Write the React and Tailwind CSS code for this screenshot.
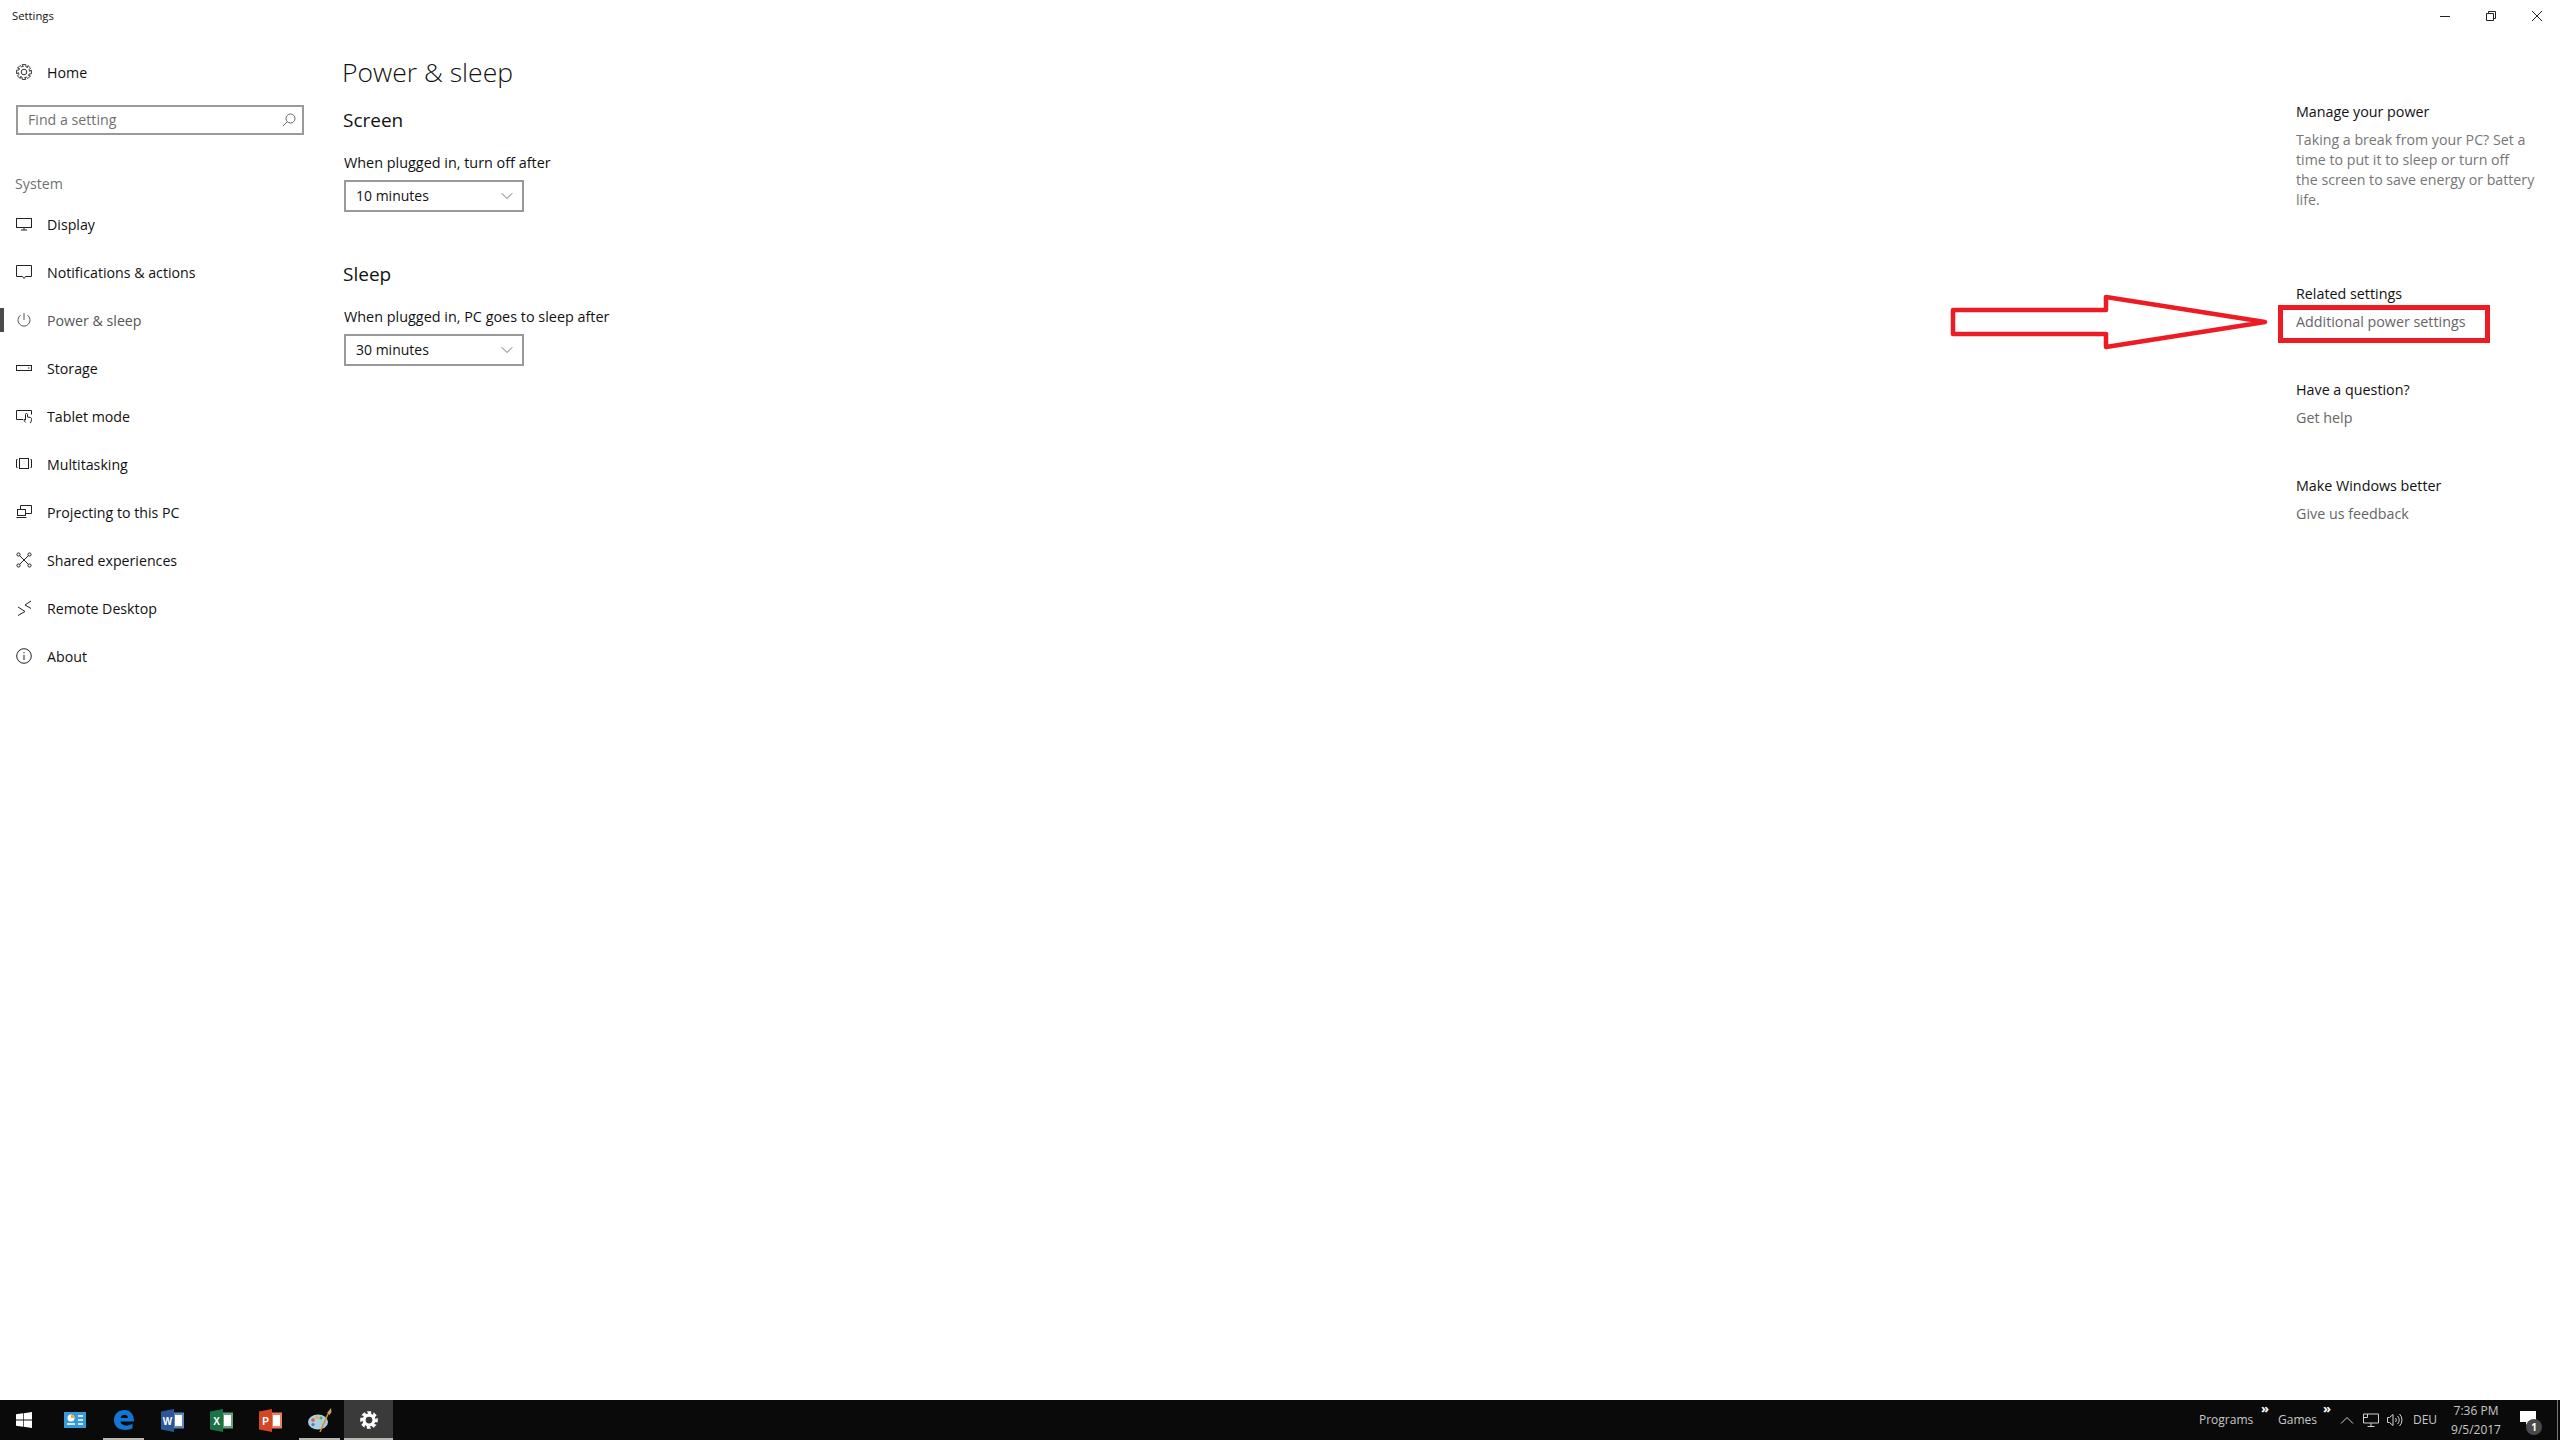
import React from 'react';
import { ChevronDown } from 'lucide-react';

const fontClass = "font-['Open_Sans','Noto_Sans',sans-serif]";

// 8-tooth cog outline, outer and inner radius in a 16 unit box
const cogPath = (outer, inner) => {
  const pts = [];
  for (let i = 0; i < 8; i++) {
    const a = (i * Math.PI) / 4;
    [[-0.24, outer], [0.24, outer], [0.36, inner], [0.66, inner]].forEach(([d, r]) => {
      pts.push(`${(8 + r * Math.cos(a + d)).toFixed(2)} ${(8 + r * Math.sin(a + d)).toFixed(2)}`);
    });
  }
  return `M${pts.join('L')}z`;
};

const HomeGear = () => (
  <svg width="16" height="16" viewBox="0 0 16 16" fill="none" stroke="#333333" strokeWidth="1" strokeLinejoin="round" className="mr-[15px]">
    <circle cx="8" cy="8" r="2.8" />
    <path d={cogPath(7.6, 5.6)} />
  </svg>
);

const TaskbarGear = () => (
  <svg width="18" height="18" viewBox="0 0 16 16" fill="#ffffff" fillRule="evenodd">
    <path d={`${cogPath(8, 5.8)}M8 5a3 3 0 1 0 0 6a3 3 0 1 0 0-6z`} />
  </svg>
);

// Thin line icons used in the settings nav
const navIcons = {
  display: <><rect x="0.5" y="2.5" width="15" height="9" /><path d="M8 11.5v2.5M5 14h6" /></>,
  notifications: <path d="M0.5 1.5h15v11h-6l-1.5 2-1.5-2h-6z" />,
  power: <><path d="M8 1v7" /><path d="M4.6 3.2a6 6 0 1 0 6.8 0" /></>,
  storage: <><rect x="0.5" y="5.5" width="15" height="5" /><path d="M12 8h1.5" /></>,
  tablet: <><path d="M7 11.5H0.5v-9h15v4" /><path d="M9.5 14.5c-1-1-1.5-2-1.5-3l1.5.5V6.5a1 1 0 0 1 2 0V9l3 .5c1 .3 1 1 1 2 0 1.5-.5 2.500-1.200 3.500" /></>,
  multitasking: <><rect x="3.5" y="2.5" width="9" height="10" /><path d="M1.5 3.5H0.5v8h1M14.5 3.5h1v8h-1" /></>,
  projecting: <><path d="M4.5 5V1.5h11v8H10" /><rect x="1.5" y="5.5" width="8" height="6" /><path d="M0.5 13.5h10" /></>,
  shared: <><circle cx="2.5" cy="2.5" r="1.6" /><circle cx="13.5" cy="2.5" r="1.6" /><circle cx="2.5" cy="13.5" r="1.6" /><circle cx="13.5" cy="13.5" r="1.6" /><path d="M3.7 3.7l8.6 8.6M12.3 3.7l-8.6 8.6" /></>,
  remote: <><path d="M2 7l7 4.5L2 15.5" /><path d="M15 1L9 5l6 3.5" /></>,
  about: <><circle cx="8" cy="8" r="7.3" /><path d="M8 7v5M8 4.2v1.2" /></>,
};

const navItems = [
  { label: 'Display', icon: 'display' },
  { label: 'Notifications & actions', icon: 'notifications' },
  { label: 'Power & sleep', icon: 'power', active: true },
  { label: 'Storage', icon: 'storage' },
  { label: 'Tablet mode', icon: 'tablet' },
  { label: 'Multitasking', icon: 'multitasking' },
  { label: 'Projecting to this PC', icon: 'projecting' },
  { label: 'Shared experiences', icon: 'shared' },
  { label: 'Remote Desktop', icon: 'remote' },
  { label: 'About', icon: 'about' },
];

const Dropdown = ({ value }) => (
  <div className="w-[180px] h-[32px] border-2 border-[#999999] flex items-center justify-between pl-[10px] pr-[5px] text-[14px] text-[#111111]">
    <span className="pb-[1px]">{value}</span>
    <ChevronDown className="w-[20px] h-[20px] text-[#555555]" strokeWidth={1} />
  </div>
);

const Sidebar = () => (
  <aside className="w-[342px] shrink-0">
    <div className="h-[48px] mt-[16px] pl-[16px] flex items-center text-[14.2px] text-[#111111]">
      <HomeGear />
      <span className="pt-[1px]">Home</span>
    </div>
    <div className="ml-[16px] mt-[9px] w-[288px] h-[30px] border-2 border-[#999999] flex items-center justify-between pl-[10px] pr-[6px] text-[14.2px] text-[#707070]">
      <span className="pb-[1px]">Find a setting</span>
      <svg width="14" height="14" viewBox="0 0 14 14" fill="none" stroke="#666666" strokeWidth="1">
        <circle cx="8.5" cy="5.5" r="4.5" />
        <path d="M5.3 8.7L0.8 13.2" />
      </svg>
    </div>
    <div className="mt-[33px] h-[32px] pl-[15px] flex items-center text-[14.2px] text-[#707070]">System</div>
    {navItems.map((item) => (
      <div key={item.label} className="relative h-[48px] pl-[16px] flex items-center text-[14.2px]">
        {item.active && <div className="absolute left-0 top-[12px] w-[4px] h-[24px] bg-[#4c4a48]" />}
        <svg width="16" height="16" viewBox="0 0 16 16" fill="none" stroke={item.active ? '#555555' : '#222222'} strokeWidth="1" className="mr-[15px] shrink-0">
          {navIcons[item.icon]}
        </svg>
        <span className={`pt-[1px] ${item.active ? 'text-[#555555]' : 'text-[#111111]'}`}>{item.label}</span>
      </div>
    ))}
  </aside>
);

const MainContent = () => (
  <main className="flex-1">
    <h1 className="mt-[20px] h-[40px] leading-[40px] text-[26.5px] text-[#111111] font-light">Power &amp; sleep</h1>
    <h2 className="mt-[14px] h-[28px] leading-[28px] ml-[1px] text-[19px] text-[#111111]">Screen</h2>
    <div className="mt-[19px] h-[20px] leading-[20px] ml-[2px] text-[14.4px] text-[#111111]">When plugged in, turn off after</div>
    <div className="mt-[7px] ml-[2px]"><Dropdown value="10 minutes" /></div>
    <h2 className="mt-[48px] h-[28px] leading-[28px] ml-[1px] text-[19px] text-[#111111]">Sleep</h2>
    <div className="mt-[19px] h-[20px] leading-[20px] ml-[2px] text-[14.4px] text-[#111111]">When plugged in, PC goes to sleep after</div>
    <div className="mt-[7px] ml-[2px]"><Dropdown value="30 minutes" /></div>
  </main>
);

const RightPanel = () => (
  <section className="relative w-[264px] shrink-0 text-[14.3px] leading-[20px]">
    <div className="mt-[70px] text-[#111111]">Manage your power</div>
    <div className="mt-[8px] text-[#767676] text-[14.2px]">
      <div>Taking a break from your PC? Set a</div>
      <div>time to put it to sleep or turn off</div>
      <div>the screen to save energy or battery</div>
      <div>life.</div>
    </div>
    <div className="mt-[74px] text-[#111111]">Related settings</div>
    <div className="mt-[8px] text-[#666666]">Additional power settings</div>
    <div className="mt-[48px] text-[#111111]">Have a question?</div>
    <div className="mt-[8px] text-[#666666]">Get help</div>
    <div className="mt-[48px] text-[#111111]">Make Windows better</div>
    <div className="mt-[8px] text-[#666666]">Give us feedback</div>

    {/* Red annotation drawn over the screenshot */}
    <div className="absolute left-[-18px] top-[273px] w-[212px] h-[38px] border-[5px] border-[#ed1c24]" />
    <svg className="absolute left-[-346px] top-[262px]" width="325" height="56" viewBox="0 0 325 56" fill="none" stroke="#ed1c24" strokeWidth="4.5" strokeLinejoin="round">
      <path d="M3 16H156V3L315 28L156 53V40H3z" />
    </svg>
  </section>
);

const StartIcon = () => (
  <svg width="16" height="16" viewBox="0 0 17 17" fill="#ffffff">
    <path d="M0 2.5L7.5 1.4V8H0zM8.2 1.3L17 0v8H8.2zM0 9h7.5v6.6L0 14.500zM8.2 9H17v8L8.2 15.700z" />
  </svg>
);

const ControlPanelIcon = () => (
  <svg width="22" height="16" viewBox="0 0 22 16">
    <rect width="22" height="16" fill="#3a9ad9" />
    <circle cx="7" cy="6" r="3.5" fill="#ffffff" />
    <path d="M7 6V2.5A3.5 3.5 0 0 1 10.5 6z" fill="#f0b030" />
    <rect x="3" y="11" width="8" height="2" fill="#cfe9f7" />
    <rect x="14" y="3" width="5" height="2" fill="#cfe9f7" />
    <rect x="14" y="7" width="5" height="2" fill="#cfe9f7" />
    <rect x="14" y="11" width="5" height="2" fill="#cfe9f7" />
  </svg>
);

const EdgeIcon = () => (
  <svg width="20" height="20" viewBox="0 0 20 20">
    <path fill="#1277d4" d="M0 10C0 4 4.5 0 10.5 0 16.5 0 20 4.5 20 11.5H6.5c.2 3.8 6.5 5.5 12 2.2v4.6C12 21.500 0 20.500 0 10zM6.600 8h7.400c0-4.500-6.800-4.500-7.400 0z" />
  </svg>
);

const OfficeIcon = ({ letter, dark, light }) => (
  <svg width="23" height="23" viewBox="0 0 23 23">
    <rect x="8" y="3.500" width="15" height="16" fill={light} />
    <rect x="14" y="6" width="7" height="11" fill="#ffffff" />
    <path d="M0 2.500L13 0V23L0 20.500z" fill={dark} />
    <text x="6.500" y="15.500" textAnchor="middle" fontSize="10" fontWeight="700" fill="#ffffff" fontFamily="Liberation Sans">{letter}</text>
  </svg>
);

const PaintIcon = () => (
  <svg width="24" height="24" viewBox="0 0 24 24">
    <ellipse cx="10" cy="14" rx="10" ry="7.500" fill="#a9cfe0" />
    <circle cx="5" cy="12" r="1.800" fill="#e05a4a" />
    <circle cx="9" cy="9.500" r="1.800" fill="#e8b33c" />
    <circle cx="13" cy="10" r="1.500" fill="#58a55c" />
    <circle cx="5" cy="16.500" r="1.600" fill="#3d7fc4" />
    <path d="M12 24L20 6" stroke="#d58a2c" strokeWidth="1.500" />
    <path d="M19 5L23 0l.5 4-2 3z" fill="#c9a36a" />
  </svg>
);

const TaskIcon = ({ children, active, running }) => (
  <div className={`relative w-[49px] h-full flex items-center justify-center ${active ? 'bg-[#3a3a3a]' : ''}`}>
    {children}
    {running && <div className="absolute bottom-0 left-[4px] right-[4px] h-[2px] bg-[#b8b8b0]" />}
    {active && <div className="absolute bottom-0 left-0 right-0 h-[2px] bg-[#b8b8b0]" />}
  </div>
);

const Taskbar = () => (
  <footer className="h-[40px] shrink-0 bg-[#0a0a0a] flex items-center text-[#c8c8c8] text-[12px]">
    <div className="w-[50px] h-full flex items-center justify-center pr-[2px]"><StartIcon /></div>
    <TaskIcon><ControlPanelIcon /></TaskIcon>
    <TaskIcon running><EdgeIcon /></TaskIcon>
    <TaskIcon><OfficeIcon letter="W" dark="#2b579a" light="#5c86c4" /></TaskIcon>
    <TaskIcon><OfficeIcon letter="X" dark="#1e7145" light="#5fa67e" /></TaskIcon>
    <TaskIcon><OfficeIcon letter="P" dark="#d24726" light="#e8805f" /></TaskIcon>
    <TaskIcon running><PaintIcon /></TaskIcon>
    <TaskIcon active><TaskbarGear /></TaskIcon>

    <div className="ml-auto flex items-center h-full">
      <div className="relative w-[78px] pl-[2px]">Programs<span className="absolute right-[6px] top-[-12px] text-[13px] font-bold text-white">»</span></div>
      <div className="relative w-[60px] pl-[3px]">Games<span className="absolute right-[4px] top-[-12px] text-[13px] font-bold text-white">»</span></div>
      <div className="w-[24px] flex justify-center">
        <svg width="14" height="8" viewBox="0 0 14 8" fill="none" stroke="#d0d0d0" strokeWidth="1"><path d="M1 7.500L7 1.500l6 6" /></svg>
      </div>
      <div className="w-[24px] flex justify-center">
        <svg width="16" height="14" viewBox="0 0 16 14" fill="none" stroke="#d0d0d0" strokeWidth="1">
          <path d="M4.500 1h11v9H0.500V1h4v3.500h-4M8 10v3.500M4.500 13.500h7" />
        </svg>
      </div>
      <div className="w-[24px] flex justify-center">
        <svg width="16" height="14" viewBox="0 0 16 14" fill="none" stroke="#d0d0d0" strokeWidth="1">
          <path d="M0.500 4.500h2L6 1.500v11l-3.500-3h-2zM8.500 5a3 3 0 0 1 0 4M10.500 3a5.500 5.500 0 0 1 0 8M12.500 1a8.500 8.500 0 0 1 0 12" />
        </svg>
      </div>
      <div className="w-[36px] text-center">DEU</div>
      <div className="w-[66px] text-center text-[12px] leading-[19px]">
        <div>7:36 PM</div>
        <div>9/5/2017</div>
      </div>
      <div className="relative w-[48px] h-full flex items-center justify-center pr-[10px] pb-[3px]">
        <svg width="16" height="15" viewBox="0 0 16 15" fill="#ffffff"><path d="M0 0h16v11H9l-3 3v-3H0z" /></svg>
        <div className="absolute left-[17px] top-[19px] w-[16px] h-[16px] rounded-full bg-[#4a4a4a] text-white text-[10px] font-bold flex items-center justify-center">1</div>
      </div>
      <div className="w-[1px] h-full bg-[#777777] mr-[2px]" />
    </div>
  </footer>
);

export default function App() {
  return (
    <div className={`w-[2560px] h-[1440px] bg-white flex flex-col overflow-hidden ${fontClass}`}>
      <header className="h-[32px] shrink-0 flex items-center justify-between">
        <span className="pl-[12px] text-[11.3px] text-[#111111]">Settings</span>
        <div className="flex h-full">
          <div className="w-[46px] flex items-center justify-center">
            <svg width="10" height="10" viewBox="0 0 10 10" stroke="#222222"><path d="M0 5.500h10" /></svg>
          </div>
          <div className="w-[46px] flex items-center justify-center">
            <svg width="10" height="10" viewBox="0 0 10 10" fill="none" stroke="#222222"><path d="M0.500 2.500h7v7h-7zM2.500 2.500v-2h7v7h-2" /></svg>
          </div>
          <div className="w-[46px] flex items-center justify-center">
            <svg width="10" height="10" viewBox="0 0 10 10" stroke="#222222"><path d="M0 0l10 10M10 0L0 10" /></svg>
          </div>
        </div>
      </header>
      <div className="flex-1 flex">
        <Sidebar />
        <MainContent />
        <RightPanel />
      </div>
      <Taskbar />
    </div>
  );
}
